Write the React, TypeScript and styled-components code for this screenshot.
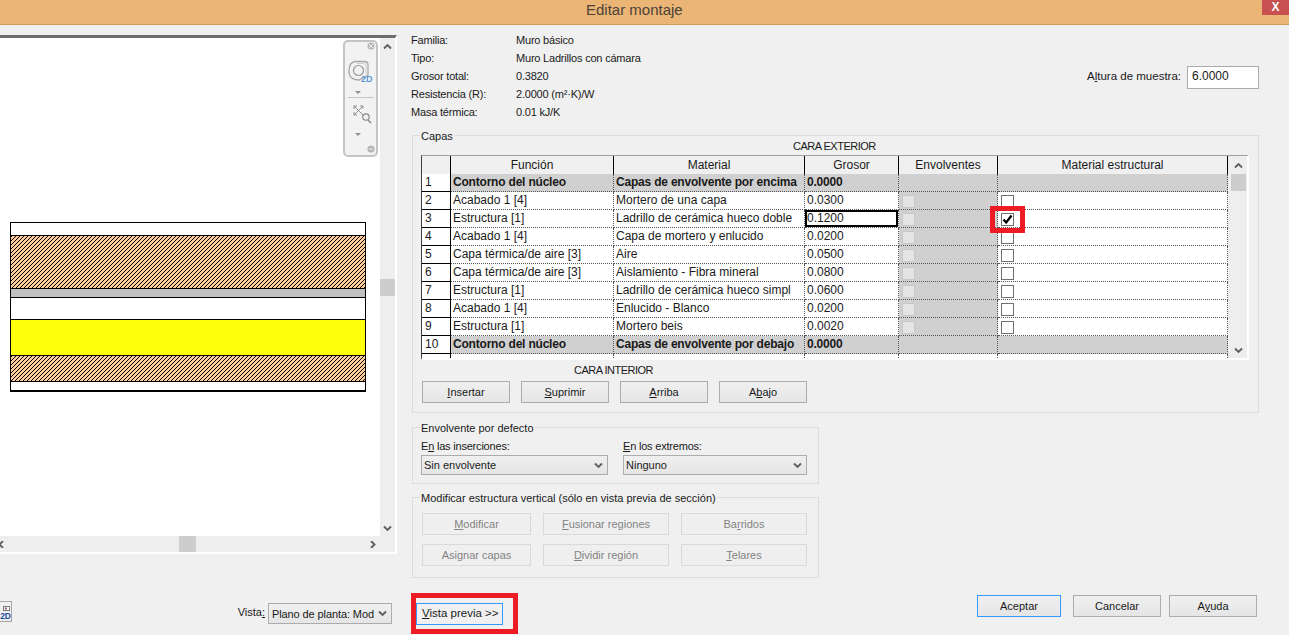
import React from "react";
import styled, { createGlobalStyle } from "styled-components";

const GlobalStyle = createGlobalStyle`
  html, body {
    margin: 0;
    padding: 0;
    height: 100%;
    overflow: hidden;
    background: #f0f0f0;
    color: #1a1a1a;
    font-family: "Liberation Sans", Arial, sans-serif;
    font-size: 12px;
  }
  * { box-sizing: border-box; }
`;

const Window = styled.div`
  display: flex;
  flex-direction: column;
  width: 1289px;
  height: 635px;
  overflow: hidden;
`;

const TitleBar = styled.div`
  display: flex;
  justify-content: space-between;
  height: 25px;
  padding-left: 586px;
  background: #ebb576;
  border-bottom: 1px solid #cf9c5c;
`;

const Title = styled.div`
  font-size: 15px;
  line-height: 20px;
  color: #4a4238;
`;

const CloseButton = styled.div`
  width: 27px;
  height: 15px;
  background: #c75050;
  color: #fff;
  font-size: 12px;
  font-weight: bold;
  line-height: 14px;
  text-align: center;
`;

const Content = styled.div`
  display: flex;
  flex: 1;
`;

/* left side: preview */
const PreviewColumn = styled.div`
  display: flex;
  flex-direction: column;
  width: 405px;
  padding-top: 10px;
`;

const PreviewFrame = styled.div`
  display: grid;
  grid-template-columns: 380px 15px;
  grid-template-rows: 498px 16px;
  width: 397px;
  border-top: 3px solid #6d6d6d;
  border-right: 2px solid #fff;
  border-bottom: 2px solid #fff;
`;

const Canvas = styled.div`
  position: relative;
  padding: 184px 14px 0 10px;
  background: #fff;
`;

const Wall = styled.div`
  display: flex;
  flex-direction: column;
  border: 1px solid #000;
  border-bottom-width: 2px;
`;

const brickHatch =
  "linear-gradient(135deg, #000 12.5%, #ffcc99 12.5%, #ffcc99 50%, #000 50%, #000 62.5%, #ffcc99 62.5%) 0 0 / 4px 4px";

const WallLayer = styled.div<{ $h: number; $kind: "white" | "brick" | "grey" | "yellow" }>`
  height: ${(p) => p.$h}px;
  border-bottom: 1px solid #000;
  background: ${(p) =>
    p.$kind === "brick"
      ? brickHatch
      : p.$kind === "grey"
      ? "#c0c0c0"
      : p.$kind === "yellow"
      ? "#ffff0c"
      : "#fff"};
  &:last-child {
    border-bottom: none;
  }
`;

const NavBar = styled.div`
  position: absolute;
  top: 2px;
  left: 343px;
  width: 35px;
  height: 117px;
  background: #f2f2f2;
  border: 2px solid #c4c4c4;
  border-radius: 5px;
`;

const NavIcon = styled.svg`
  display: block;
`;

const TwoDTag = styled.span`
  position: absolute;
  top: 32px;
  left: 16px;
  color: #5b9bd5;
  font-size: 9px;
  font-weight: bold;
  line-height: 10px;
`;

const ScrollTrack = styled.div<{ $dir: "v" | "h" }>`
  display: flex;
  flex-direction: ${(p) => (p.$dir === "v" ? "column" : "row")};
  justify-content: space-between;
  align-items: center;
  background: #eeeeee;
`;

const ScrollThumb = styled.div<{ $w: number; $h: number }>`
  flex: none;
  width: ${(p) => p.$w}px;
  height: ${(p) => p.$h}px;
  background: #cdcdcd;
`;

const ArrowSlot = styled.div<{ $h?: number; $ml?: number }>`
  display: flex;
  align-items: center;
  justify-content: center;
  flex: none;
  width: 15px;
  height: ${(p) => p.$h || 16}px;
  margin-left: ${(p) => p.$ml || 0}px;
`;

const PreviewFooter = styled.div`
  display: flex;
  justify-content: space-between;
  align-items: flex-start;
  height: 22px;
  margin-top: 49px;
  padding-right: 13px;
`;

const ViewToggle = styled.div`
  display: flex;
  flex-direction: column;
  align-items: flex-end;
  gap: 1px;
  width: 24px;
  height: 21px;
  margin: -2px 0 0 -12px;
  padding-top: 4px;
  border: 1px solid #a6a6a6;
  color: #1d4e9e;
  font-size: 8.5px;
  font-weight: bold;
  line-height: 9px;
  background: #f0f0f0;
`;

const ViewPicker = styled.div`
  display: flex;
  align-items: center;
  gap: 3px;
`;

const ViewLabel = styled.span`
  padding-bottom: 3px;
  font-size: 11px;
`;

/* right side: form */
const FormColumn = styled.div`
  display: flex;
  flex-direction: column;
  flex: 1;
  padding: 6px 30px 0 7px;
`;

const InfoHeader = styled.div`
  display: flex;
  justify-content: space-between;
  align-items: center;
  height: 90px;
  margin-bottom: 14px;
`;

const InfoGrid = styled.div`
  display: grid;
  grid-template-columns: 105px 1fr;
  grid-auto-rows: 18px;
  align-items: center;
  margin-left: -1px;
  font-size: 11px;
  letter-spacing: -0.2px;
`;

const SampleHeight = styled.div`
  display: flex;
  align-items: center;
  gap: 6px;
  font-size: 11.5px;
`;

const SampleInput = styled.div`
  width: 72px;
  height: 23px;
  margin-top: 2px;
  padding-left: 4px;
  border: 1px solid #ababab;
  background: #fff;
  line-height: 19px;
  font-size: 12px;
`;

const GroupBox = styled.div<{ $w: number; $h: number; $mt?: number }>`
  position: relative;
  width: ${(p) => p.$w}px;
  height: ${(p) => p.$h}px;
  margin-top: ${(p) => p.$mt || 0}px;
  border: 1px solid #dcdcdc;
  padding: 4px 8px 0 8px;
`;

const Legend = styled.div`
  position: absolute;
  top: -7px;
  left: 7px;
  padding: 0 1px;
  background: #f0f0f0;
  font-size: 11px;
  line-height: 14px;
`;

const Caption = styled.div<{ $x: number; $h: number; $mt?: number }>`
  height: ${(p) => p.$h}px;
  margin-top: ${(p) => p.$mt || 0}px;
  padding-left: ${(p) => p.$x}px;
  line-height: 12px;
  font-size: 11px;
  letter-spacing: -0.5px;
`;

const LayerTable = styled.div`
  display: flex;
  width: 828px;
  height: 205px;
  border-top: 1px solid #a0a0a0;
  border-left: 1px solid #404040;
  border-right: 2px solid #fff;
  border-bottom: 2px solid #fff;
`;

const TableBody = styled.div`
  width: 806px;
  height: 202px;
  overflow: hidden;
`;

const gridColumns = "29px 163px 191px 94px 99px 230px";

const HeaderRow = styled.div`
  display: grid;
  grid-template-columns: ${gridColumns};
  height: 18px;
  border-bottom: 1px solid #000;
`;

const HeaderCell = styled.div`
  border-right: 1px solid #000;
  background: #f0f0f0;
  text-align: center;
  line-height: 19px;
`;

const Row = styled.div`
  display: grid;
  grid-template-columns: ${gridColumns};
  height: 18px;
`;

const RowNumber = styled.div`
  padding-left: 3px;
  border-right: 1px solid #000;
  border-bottom: 1px solid #000;
  background: #fff;
  line-height: 17px;
`;

const Cell = styled.div<{ $grey?: boolean; $bold?: boolean; $active?: boolean }>`
  position: relative;
  padding-left: 2px;
  border-right: 1px dotted #555;
  border-bottom: 1px dotted #555;
  background: ${(p) => (p.$grey ? "#d0d0d0" : "#fff")};
  font-weight: ${(p) => (p.$bold ? "bold" : "normal")};
  letter-spacing: ${(p) => (p.$bold ? "-0.2px" : "0")};
  line-height: 17px;
  white-space: nowrap;
  overflow: ${(p) => (p.$active ? "visible" : "hidden")};
  box-shadow: ${(p) => (p.$active ? "inset 0 0 0 2px #000" : "none")};
`;

const CheckCell = styled(Cell)`
  overflow: visible;
  padding: 3px 0 0 3px;
`;

const CheckBox = styled.div<{ $disabled?: boolean }>`
  position: relative;
  width: 13px;
  height: 13px;
  border: 1px solid ${(p) => (p.$disabled ? "#c8c8c8" : "#707070")};
  background: ${(p) => (p.$disabled ? "#e4e4e4" : "#fff")};
`;

const RedMark = styled.div`
  position: absolute;
  top: -8px;
  left: -12px;
  width: 35px;
  height: 27px;
  border: 5px solid #ed1c24;
  z-index: 2;
`;

const CheckMark = styled.svg`
  position: absolute;
  top: 0;
  left: 0;
`;

const TableScroll = styled(ScrollTrack)`
  width: 19px;
  height: 202px;
  padding-left: 2px;
`;

const ButtonRow = styled.div<{ $w: string; $gap: number; $mt?: number }>`
  display: grid;
  grid-template-columns: ${(p) => p.$w};
  gap: ${(p) => p.$gap}px;
  margin: ${(p) => p.$mt || 0}px 0 0 1px;
`;

const Button = styled.div<{ $disabled?: boolean; $focused?: boolean }>`
  height: 22px;
  border: 1px solid ${(p) => (p.$focused ? "#3399ff" : p.$disabled ? "#d9d9d9" : "#acacac")};
  background: ${(p) => (p.$disabled ? "#efefef" : "linear-gradient(#f0f0f0, #e5e5e5)")};
  color: ${(p) => (p.$disabled ? "#838383" : "#1a1a1a")};
  font-size: 11px;
  text-align: center;
  line-height: 20px;
`;

const Fields = styled.div`
  display: grid;
  grid-template-columns: 187px 184px;
  column-gap: 15px;
  margin-top: 7px;
`;

const FieldLabel = styled.div`
  height: 14px;
  font-size: 11px;
  letter-spacing: -0.2px;
  line-height: 14px;
`;

const Select = styled.div`
  display: flex;
  justify-content: space-between;
  align-items: center;
  height: 20px;
  margin-top: 2px;
  padding: 0 4px 0 2px;
  border: 1px solid #acacac;
  background: linear-gradient(#f0f0f0, #e5e5e5);
  font-size: 11px;
  white-space: nowrap;
`;

const ViewSelect = styled(Select)`
  width: 124px;
  height: 21px;
  margin-top: 0;
  padding-left: 3px;
  letter-spacing: -0.1px;
`;

const DialogFooter = styled.div`
  display: flex;
  justify-content: space-between;
  margin-top: 17px;
`;

const PreviewToggle = styled.div`
  position: relative;
  width: 87px;
  height: 22px;
  margin: 8px 0 0 4px;
  border: 1px solid #3399ff;
  background: #f0f0f0;
  padding-left: 5px;
  font-size: 11.5px;
  line-height: 19px;
  white-space: nowrap;
`;

const RedFrame = styled.div`
  position: absolute;
  top: -11px;
  left: -6px;
  width: 107px;
  height: 41px;
  border: 5px solid #ed1c24;
`;

const DialogActions = styled.div`
  display: flex;
  gap: 12px;
  margin-right: 2px;
`;

const ActionButton = styled(Button)<{ $w: number; $ml?: number }>`
  width: ${(p) => p.$w}px;
  margin-left: ${(p) => p.$ml || 0}px;
`;

const Chevron = ({ dir = "down", color = "#5f5f5f" }: { dir?: "up" | "down" | "left" | "right"; color?: string }) => {
  const paths = {
    down: "M1 1.5 L4.5 5 L8 1.5",
    up: "M1 5.5 L4.5 2 L8 5.5",
    left: "M6 0 L2.5 3.5 L6 7",
    right: "M3 0 L6.5 3.5 L3 7",
  };
  return (
    <svg width="9" height="7" viewBox="0 0 9 7">
      <path d={paths[dir]} fill="none" stroke={color} strokeWidth="1.9" />
    </svg>
  );
};

const info = [
  ["Familia:", "Muro básico"],
  ["Tipo:", "Muro Ladrillos con cámara"],
  ["Grosor total:", "0.3820"],
  ["Resistencia (R):", "2.0000 (m²·K)/W"],
  ["Masa térmica:", "0.01 kJ/K"],
];

type Layer = { fn: string; mat: string; th: string; bold?: boolean; struct?: boolean };

const layers: Layer[] = [
  { fn: "Contorno del núcleo", mat: "Capas de envolvente por encima", th: "0.0000", bold: true },
  { fn: "Acabado 1 [4]", mat: "Mortero de una capa", th: "0.0300", struct: true },
  { fn: "Estructura [1]", mat: "Ladrillo de cerámica hueco doble", th: "0.1200", struct: true },
  { fn: "Acabado 1 [4]", mat: "Capa de mortero y enlucido", th: "0.0200", struct: true },
  { fn: "Capa térmica/de aire [3]", mat: "Aire", th: "0.0500", struct: true },
  { fn: "Capa térmica/de aire [3]", mat: "Aislamiento - Fibra mineral", th: "0.0800", struct: true },
  { fn: "Estructura [1]", mat: "Ladrillo de cerámica hueco simpl", th: "0.0600", struct: true },
  { fn: "Acabado 1 [4]", mat: "Enlucido - Blanco", th: "0.0200", struct: true },
  { fn: "Estructura [1]", mat: "Mortero beis", th: "0.0020", struct: true },
  { fn: "Contorno del núcleo", mat: "Capas de envolvente por debajo", th: "0.0000", bold: true },
  { fn: "", mat: "", th: "" },
];

export default function App() {
  return (
    <Window>
      <GlobalStyle />
      <TitleBar>
        <Title>Editar montaje</Title>
        <CloseButton>X</CloseButton>
      </TitleBar>
      <Content>
        <PreviewColumn>
          <PreviewFrame>
            <Canvas>
              <Wall>
                <WallLayer $h={13} $kind="white" />
                <WallLayer $h={53} $kind="brick" />
                <WallLayer $h={9} $kind="grey" />
                <WallLayer $h={22} $kind="white" />
                <WallLayer $h={36} $kind="yellow" />
                <WallLayer $h={26} $kind="brick" />
                <WallLayer $h={8} $kind="white" />
              </Wall>
              <NavBar>
                <NavIcon width="31" height="113" viewBox="0 0 31 113">
                  <circle cx="26" cy="4" r="3.5" fill="#b5b5b5" />
                  <path d="M24 2 L28 6 M28 2 L24 6" stroke="#eee" strokeWidth="1" />
                  <path d="M11 19.5 H19 Q23 19.5 23 23 V33 L14 38 Q4 38 4 29 Q4 19.5 11 19.5 Z" fill="none" stroke="#a8a8a8" strokeWidth="1.3" />
                  <path d="M12 21.5 H18 Q21 21.5 21 24 V32" fill="none" stroke="#cfcfcf" strokeWidth="1" />
                  <circle cx="13.5" cy="28.5" r="5" fill="none" stroke="#9a9a9a" strokeWidth="1.2" />
                  <path d="M10 49 h6 l-3 3 z" fill="#8f8f8f" />
                  <path d="M3 55.5 h26" stroke="#c4c4c4" strokeWidth="1" />
                  <path d="M9 64 L18 73 M18 64 L9 73 M9 64 h3 M9 64 v3 M18 64 h-3 M18 64 v3 M9 73 h3 M9 73 v-3" fill="none" stroke="#8f8f8f" strokeWidth="1" />
                  <circle cx="21" cy="75" r="3.2" fill="#f2f2f2" stroke="#8a8a8a" strokeWidth="1.2" />
                  <path d="M23 78 L26 81" stroke="#8a8a8a" strokeWidth="1.6" />
                  <path d="M10 91 h6 l-3 3 z" fill="#8f8f8f" />
                  <circle cx="26" cy="107" r="3.5" fill="#b5b5b5" />
                  <path d="M24 107 h4" stroke="#eee" strokeWidth="1" />
                </NavIcon>
                <TwoDTag>2D</TwoDTag>
              </NavBar>
            </Canvas>
            <ScrollTrack $dir="v">
              <ArrowSlot><Chevron dir="up" /></ArrowSlot>
              <ScrollThumb $w={15} $h={17} />
              <ArrowSlot><Chevron /></ArrowSlot>
            </ScrollTrack>
            <ScrollTrack $dir="h">
              <ArrowSlot $ml={-6}><Chevron dir="left" /></ArrowSlot>
              <ScrollThumb $w={17} $h={16} />
              <ArrowSlot $ml={-1}><Chevron dir="right" /></ArrowSlot>
            </ScrollTrack>
            <ScrollTrack $dir="h" />
          </PreviewFrame>
          <PreviewFooter>
            <ViewToggle>
              <svg width="9" height="7" viewBox="0 0 9 7">
                <rect x="0.5" y="0.5" width="8" height="6" fill="#fff" stroke="#4a4a4a" />
                <rect x="2" y="2" width="3" height="3" fill="#a06a80" />
              </svg>
              2D
            </ViewToggle>
            <ViewPicker>
              <ViewLabel>Vista<u>:</u></ViewLabel>
              <ViewSelect>
                Plano de planta: Mod
                <Chevron />
              </ViewSelect>
            </ViewPicker>
          </PreviewFooter>
        </PreviewColumn>

        <FormColumn>
          <InfoHeader>
            <InfoGrid>
              {info.map(([k, v]) => (
                <React.Fragment key={k}>
                  <div>{k}</div>
                  <div>{v}</div>
                </React.Fragment>
              ))}
            </InfoGrid>
            <SampleHeight>
              <span>A<u>l</u>tura de muestra:</span>
              <SampleInput>6.0000</SampleInput>
            </SampleHeight>
          </InfoHeader>

          <GroupBox $w={847} $h={278}>
            <Legend>Capas</Legend>
            <Caption $x={372} $h={15}>CARA EXTERIOR</Caption>
            <LayerTable>
              <TableBody>
                <HeaderRow>
                  <HeaderCell />
                  <HeaderCell>Función</HeaderCell>
                  <HeaderCell>Material</HeaderCell>
                  <HeaderCell>Grosor</HeaderCell>
                  <HeaderCell>Envolventes</HeaderCell>
                  <HeaderCell>Material estructural</HeaderCell>
                </HeaderRow>
                {layers.map((l, i) => (
                  <Row key={i}>
                    <RowNumber>{l.fn ? i + 1 : ""}</RowNumber>
                    <Cell $bold={l.bold} $grey={l.bold}>{l.fn}</Cell>
                    <Cell $bold={l.bold} $grey={l.bold}>{l.mat}</Cell>
                    <Cell $bold={l.bold} $grey={l.bold} $active={i === 2}>{l.th}</Cell>
                    {l.struct ? (
                      <CheckCell $grey>
                        <CheckBox $disabled />
                      </CheckCell>
                    ) : (
                      <Cell $grey={l.bold} />
                    )}
                    {l.struct ? (
                      <CheckCell>
                        <CheckBox>
                          {i === 2 && (
                            <CheckMark width="11" height="11" viewBox="0 0 11 11">
                              <path d="M1.5 5.5 L4.2 8.5 L9.5 1.5" fill="none" stroke="#000" strokeWidth="2.2" />
                            </CheckMark>
                          )}
                          {i === 2 && <RedMark />}
                        </CheckBox>
                      </CheckCell>
                    ) : (
                      <Cell $grey={l.bold} />
                    )}
                  </Row>
                ))}
              </TableBody>
              <TableScroll $dir="v">
                <div>
                  <ArrowSlot $h={18}><Chevron dir="up" /></ArrowSlot>
                  <ScrollThumb $w={15} $h={17} />
                </div>
                <ArrowSlot><Chevron /></ArrowSlot>
              </TableScroll>
            </LayerTable>
            <Caption $x={153} $h={12} $mt={4}>CARA INTERIOR</Caption>
            <ButtonRow $w="repeat(4, 88px)" $gap={11} $mt={5}>
              <Button><u>I</u>nsertar</Button>
              <Button><u>S</u>uprimir</Button>
              <Button><u>A</u>rriba</Button>
              <Button>A<u>b</u>ajo</Button>
            </ButtonRow>
          </GroupBox>

          <GroupBox $w={407} $h={57} $mt={14}>
            <Legend>Envolvente por defecto</Legend>
            <Fields>
              <div>
                <FieldLabel>E<u>n</u> las inserciones:</FieldLabel>
                <Select>Sin envolvente<Chevron /></Select>
              </div>
              <div>
                <FieldLabel><u>E</u>n los extremos:</FieldLabel>
                <Select>Ninguno<Chevron /></Select>
              </div>
            </Fields>
          </GroupBox>

          <GroupBox $w={407} $h={81} $mt={13}>
            <Legend>Modificar estructura vertical (sólo en vista previa de sección)</Legend>
            <ButtonRow $w="109px 126px 126px" $gap={12} $mt={11}>
              <Button $disabled><u>M</u>odificar</Button>
              <Button $disabled><u>F</u>usionar regiones</Button>
              <Button $disabled>Ba<u>r</u>ridos</Button>
            </ButtonRow>
            <ButtonRow $w="109px 126px 126px" $gap={12} $mt={9}>
              <Button $disabled>Asi<u>g</u>nar capas</Button>
              <Button $disabled><u>D</u>ividir región</Button>
              <Button $disabled><u>T</u>elares</Button>
            </ButtonRow>
          </GroupBox>

          <DialogFooter>
            <PreviewToggle>
              <u>V</u>ista previa &gt;&gt;
              <RedFrame />
            </PreviewToggle>
            <DialogActions>
              <ActionButton $w={84} $focused>Aceptar</ActionButton>
              <ActionButton $w={88}>Cancelar</ActionButton>
              <ActionButton $w={88} $ml={-4}>A<u>y</u>uda</ActionButton>
            </DialogActions>
          </DialogFooter>
        </FormColumn>
      </Content>
    </Window>
  );
}
